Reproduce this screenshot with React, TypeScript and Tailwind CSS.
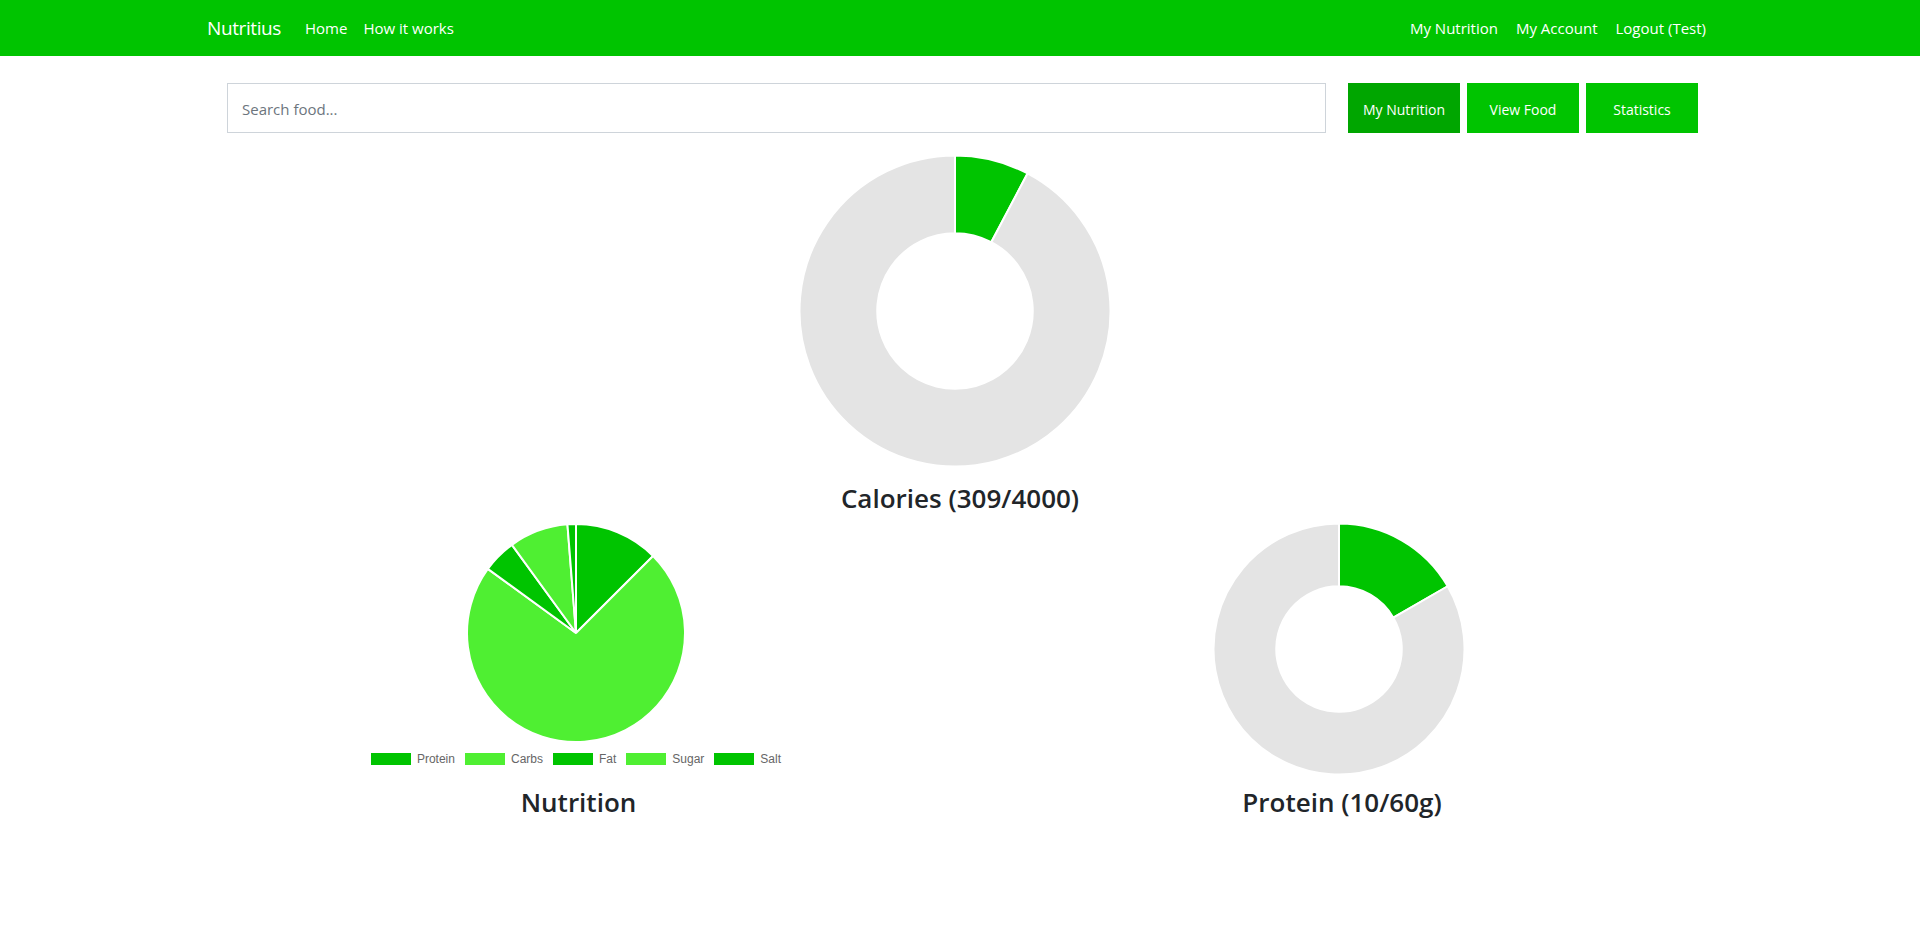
import React from "react";

const DARK = "#00c400";
const LIGHT = "#4fef32";
const GRAY = "#e4e4e4";

function pt(cx: number, cy: number, rad: number, a: number): [number, number] {
  const t = (a * Math.PI) / 180;
  return [cx + rad * Math.sin(t), cy - rad * Math.cos(t)];
}

function arcPath(cx: number, cy: number, R: number, r: number, a0: number, a1: number) {
  const large = a1 - a0 > 180 ? 1 : 0;
  const [ox0, oy0] = pt(cx, cy, R, a0);
  const [ox1, oy1] = pt(cx, cy, R, a1);
  if (r <= 0) {
    return `M ${cx} ${cy} L ${ox0} ${oy0} A ${R} ${R} 0 ${large} 1 ${ox1} ${oy1} Z`;
  }
  const [ix0, iy0] = pt(cx, cy, r, a0);
  const [ix1, iy1] = pt(cx, cy, r, a1);
  return `M ${ox0} ${oy0} A ${R} ${R} 0 ${large} 1 ${ox1} ${oy1} L ${ix1} ${iy1} A ${r} ${r} 0 ${large} 0 ${ix0} ${iy0} Z`;
}

type Seg = { value: number; color: string };

function Chart({ size, R, cutout, segs, className }: { size: number; R: number; cutout: number; segs: Seg[]; className?: string }) {
  const total = segs.reduce((s, x) => s + x.value, 0);
  const c = size / 2;
  let acc = 0;
  return (
    <svg width={size} height={size} viewBox={`0 0 ${size} ${size}`} className={className}>
      {segs.map((s, i) => {
        const a0 = (acc / total) * 360;
        acc += s.value;
        const a1 = (acc / total) * 360;
        return (
          <path
            key={i}
            d={arcPath(c, c, R, R * cutout, a0, a1)}
            fill={s.color}
            stroke="#fff"
            strokeWidth={2}
            strokeLinejoin="bevel"
          />
        );
      })}
    </svg>
  );
}

const legend = [
  { label: "Protein", color: DARK },
  { label: "Carbs", color: LIGHT },
  { label: "Fat", color: DARK },
  { label: "Sugar", color: LIGHT },
  { label: "Salt", color: DARK },
];

export default function App() {
  const font = { fontFamily: '"Open Sans", "Noto Sans", sans-serif' };
  return (
    <div className="min-h-[947px] bg-white" style={font}>
      <nav className="h-[56px] bg-[#00c400]">
        <div className="w-[1536px] mx-auto px-[15px] h-full flex items-center justify-between">
          <div className="flex items-center">
            <span className="text-[19px] text-white mr-[16px] tracking-[-0.4px]">Nutritius</span>
            <span className="text-[15px] text-white px-2">Home</span>
            <span className="text-[15px] text-white px-2">How it works</span>
          </div>
          <div className="flex items-center">
            <span className="text-[15px] text-white px-[9px]">My Nutrition</span>
            <span className="text-[15px] text-white px-[9px]">My Account</span>
            <span className="text-[15px] text-white px-[9px] mr-[-2px]">Logout (Test)</span>
          </div>
        </div>
      </nav>

      <div className="w-[1536px] mx-auto px-[15px]">
        <div className="flex mt-[27px] pl-[20px]">
          <input
            className="w-[1099px] h-[50px] border border-[#ced4da] px-[14px] pt-[2px] text-[15px] text-[#495057] placeholder:text-[#6c757d] outline-none"
            placeholder="Search food..."
          />
          <div className="flex gap-[7px] ml-[22px]">
            <button className="w-[112px] h-[50px] pt-[3px] bg-[#00a600] text-white text-[14px]">My Nutrition</button>
            <button className="w-[112px] h-[50px] pt-[3px] bg-[#00c400] text-white text-[14px]">View Food</button>
            <button className="w-[112px] h-[50px] pt-[3px] bg-[#00c400] text-white text-[14px]">Statistics</button>
          </div>
        </div>

        <div className="flex flex-col items-center mt-[22px]">
          <Chart
            size={312}
            R={155.5}
            cutout={0.5}
            segs={[
              { value: 309, color: DARK },
              { value: 3691, color: GRAY },
            ]}
            className="mr-[10px]"
          />
          <h3 className="mt-[14px] text-[26px] leading-[34px] font-semibold text-[#212529]">Calories (309/4000)</h3>
        </div>

        <div className="grid grid-cols-2 -mx-[15px] mt-[8px]">
          <div className="px-[15px] flex flex-col items-center">
            <Chart
              size={220}
              R={109}
              cutout={0}
              segs={[
                { value: 10, color: DARK },
                { value: 58, color: LIGHT },
                { value: 4, color: DARK },
                { value: 7, color: LIGHT },
                { value: 1, color: DARK },
              ]}
            />
            <div className="mt-[10px] h-[12px] flex items-center" style={{ fontFamily: '"Liberation Sans", Arial, sans-serif' }}>
              {legend.map((l, i) => (
                <div key={i} className="flex items-center mr-[10px] last:mr-0">
                  <span className="w-[40px] h-[12px]" style={{ background: l.color }} />
                  <span className="ml-[6px] text-[12px] text-[#666] leading-[12px]">{l.label}</span>
                </div>
              ))}
            </div>
            <h3 className="mt-[20px] text-[26px] leading-[34px] font-semibold text-[#212529] ml-[5px]">Nutrition</h3>
          </div>
          <div className="px-[15px] flex flex-col items-center">
            <Chart
              size={252}
              R={125.5}
              cutout={0.5}
              segs={[
                { value: 10, color: DARK },
                { value: 50, color: GRAY },
              ]}
              className="mr-[10px]"
            />
            <h3 className="mt-[10px] text-[26px] leading-[34px] font-semibold text-[#212529] mr-[4px]">Protein (10/60g)</h3>
          </div>
        </div>
      </div>
    </div>
  );
}
